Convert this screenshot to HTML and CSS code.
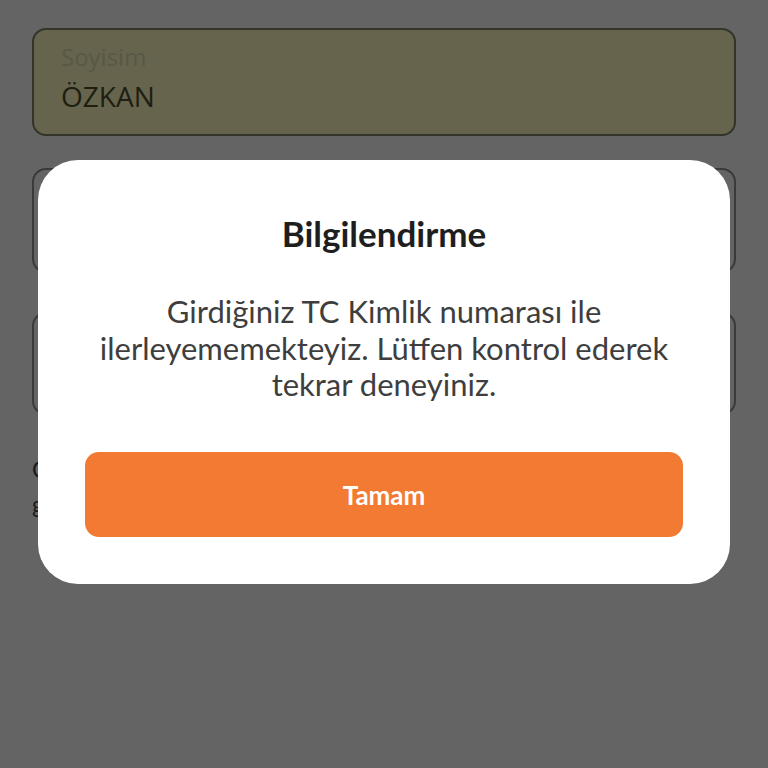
FILE: index.html
```html
<!DOCTYPE html>
<html lang="tr">
<head>
<meta charset="utf-8">
<title>Bilgilendirme</title>
<link rel="stylesheet" href="styles.css">
</head>
<body>
<div class="page">
  <div class="field field-filled">
    <div class="field-label">Soyisim</div>
    <div class="field-value">ÖZKAN</div>
  </div>
  <div class="field field-second"></div>
  <div class="field field-third"></div>
  <p class="note">Girdiğiniz bilgiler<br>güvenle saklanır</p>
</div>
<div class="overlay">
  <div class="dialog">
    <h2 class="dialog-title">Bilgilendirme</h2>
    <p class="dialog-text">Girdiğiniz TC Kimlik numarası ile ilerleyememekteyiz. Lütfen kontrol ederek tekrar deneyiniz.</p>
    <button class="dialog-btn">Tamam</button>
  </div>
</div>
</body>
</html>
```
FILE: styles.css
```css
html, body {
  margin: 0;
  padding: 0;
  width: 768px;
  height: 768px;
  overflow: hidden;
  background: #646464;
  font-family: "Open Sans", "Noto Sans", sans-serif;
}
.page {
  padding: 28px 32px 0 32px;
  display: flex;
  flex-direction: column;
}
.field {
  box-sizing: border-box;
  height: 106px;
  border: 2px solid #3a3a3a;
  border-radius: 14px;
}
.field-filled {
  height: 108px;
  background: #66644c;
  padding: 10px 28px 0 27px;
  border-color: #34342a;
}
.field-label {
  font-size: 24px;
  line-height: 34px;
  color: #595847;
}
.field-value {
  font-size: 28px;
  line-height: 38px;
  color: #1f1e12;
  margin-top: 3px;
}
.field-second {
  margin-top: 32px;
  height: 105px;
}
.field-third {
  margin-top: 39px;
  height: 103px;
}
.note {
  margin: 37px 0 0 0;
  font-family: Lato, sans-serif;
  font-size: 23px;
  line-height: 35px;
  color: #1a1a1a;
}
.overlay {
  position: absolute;
  left: 0;
  top: 0;
  width: 768px;
  height: 768px;
}
.dialog {
  position: absolute;
  left: 38px;
  top: 160px;
  width: 692px;
  height: 424px;
  box-sizing: border-box;
  background: #ffffff;
  border-radius: 40px;
  padding: 47px;
  display: flex;
  flex-direction: column;
  align-items: center;
  font-family: Lato, sans-serif;
}
.dialog-title {
  margin: 6px 0 0 0;
  font-size: 35px;
  line-height: 40px;
  font-weight: 700;
  color: #1e1e1e;
}
.dialog-text {
  margin: 40px 0 0 0;
  font-size: 31px;
  line-height: 36.5px;
  color: #3e3e3e;
  text-align: center;
}
.dialog-btn {
  margin-top: auto;
  width: 100%;
  height: 85px;
  border: none;
  border-radius: 14px;
  background: #f27a33;
  color: #ffffff;
  font-family: Lato, sans-serif;
  font-weight: 700;
  font-size: 26px;
  cursor: pointer;
}
```
